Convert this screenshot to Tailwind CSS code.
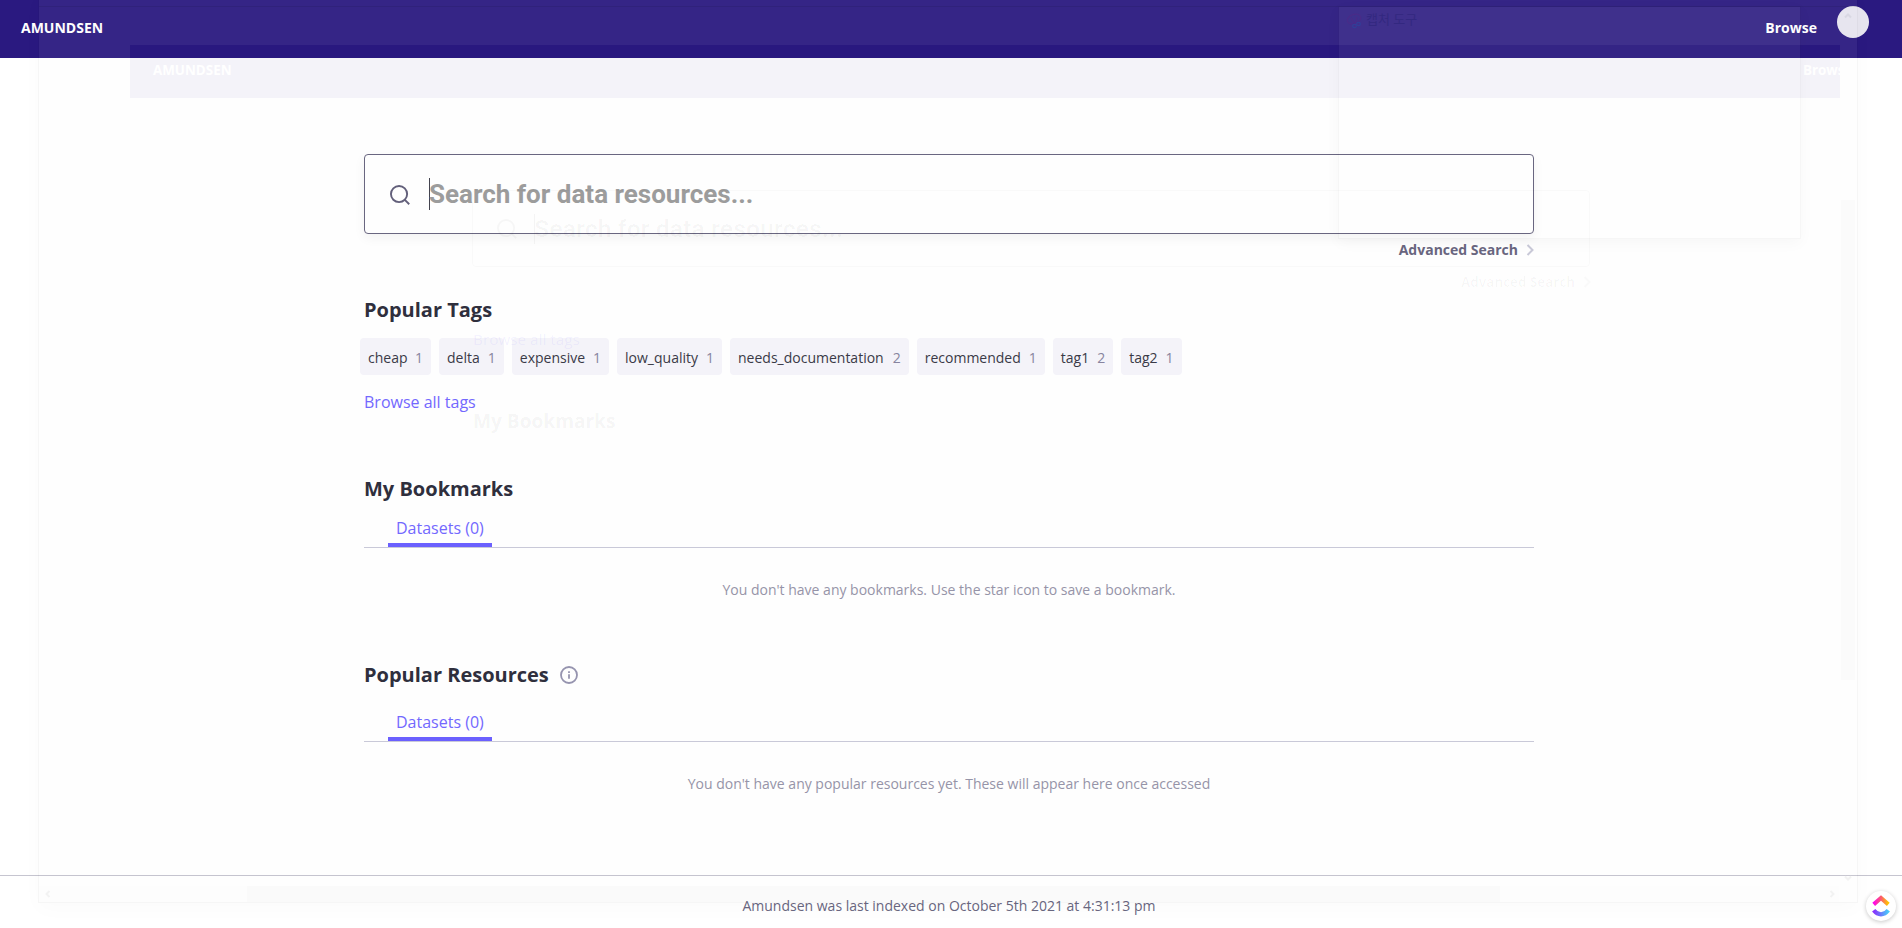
<!DOCTYPE html>
<html lang="en">
<head>
<meta charset="utf-8">
<title>Amundsen</title>
<script src="https://cdn.jsdelivr.net/npm/@tailwindcss/browser@4"></script>
</head>
<body class="relative flex h-[928px] w-[1902px] flex-col overflow-hidden bg-white font-['Open_Sans','Noto_Sans_CJK_KR',sans-serif] text-sm text-[#30303e]">
<header class="flex h-[58px] shrink-0 items-start justify-between bg-[#2a1980] pl-[21px] pr-[33px] font-bold text-white">
  <a class="mt-[18px] leading-5">AMUNDSEN</a>
  <div class="flex items-start gap-5">
    <a class="mt-[18px] leading-5">Browse</a>
    <span class="mt-[6px] size-8 rounded-full bg-[#e7e5ef]"></span>
  </div>
</header>

<main class="ml-[364px] flex w-[1170px] flex-1 flex-col pt-24">
  <div class="flex h-20 shrink-0 items-center rounded border border-[#6a6781] bg-white pl-[25px] shadow-[0_4px_12px_rgba(0,0,0,0.05)]">
    <svg class="mt-px size-5" viewBox="0 0 21 21" fill="none" stroke="#63607b" stroke-width="2"><circle cx="9.5" cy="9.5" r="8.5"/><path d="M15.6 15.6l4.6 4.6"/></svg>
    <span class="ml-[19px] h-8 w-px bg-[#44444f]"></span>
    <span class="-ml-px font-[Roboto] text-[26px] leading-8 font-bold text-[#9d9d9d]">Search for data resources...</span>
  </div>
  <div class="mt-[6px] flex h-5 items-center justify-end gap-2 font-bold text-[#6a6781]">
    <span>Advanced Search</span>
    <svg class="h-3 w-2" viewBox="0 0 8 12" fill="none" stroke="#cacad9" stroke-width="2"><path d="M1.5 1l5 5-5 5"/></svg>
  </div>
  <h2 class="mt-9 text-xl leading-7 font-bold">Popular Tags</h2>
  <div class="-ml-1 mt-[14px] flex gap-2 text-[#3b3b48]">
    <span class="flex h-[37px] items-center gap-[7.5px] rounded bg-[#f5f4fa] px-2 pt-0.5">cheap<i class="not-italic text-[#8885a0]">1</i></span>
    <span class="flex h-[37px] items-center gap-2 rounded bg-[#f5f4fa] px-2 pt-0.5">delta<i class="not-italic text-[#8885a0]">1</i></span>
    <span class="flex h-[37px] items-center gap-2 rounded bg-[#f5f4fa] px-2 pt-0.5">expensive<i class="not-italic text-[#8885a0]">1</i></span>
    <span class="flex h-[37px] items-center gap-2 rounded bg-[#f5f4fa] px-2 pt-0.5">low_quality<i class="not-italic text-[#8885a0]">1</i></span>
    <span class="flex h-[37px] items-center gap-[9px] rounded bg-[#f5f4fa] px-2 pt-0.5">needs_documentation<i class="not-italic text-[#8885a0]">2</i></span>
    <span class="flex h-[37px] items-center gap-2 rounded bg-[#f5f4fa] px-2 pt-0.5">recommended<i class="not-italic text-[#8885a0]">1</i></span>
    <span class="flex h-[37px] items-center gap-2 rounded bg-[#f5f4fa] px-2 pt-0.5">tag1<i class="not-italic text-[#8885a0]">2</i></span>
    <span class="flex h-[37px] items-center gap-2 rounded bg-[#f5f4fa] px-2 pt-0.5">tag2<i class="not-italic text-[#8885a0]">1</i></span>
  </div>
  <a class="mt-[15px] text-base leading-6 text-[#7469ff]">Browse all tags</a>
  <h2 class="mt-[61px] text-xl leading-7 font-bold">My Bookmarks</h2>
  <div class="mt-[13px] flex h-8 border-b border-[#cacad9] pl-6">
    <span class="h-[31px] border-b-4 border-[#6c61ff] px-2 text-base leading-6 text-[#7469ff]">Datasets (0)</span>
  </div>
  <p class="mt-[32px] text-center leading-5 text-[#9795a9]">You don't have any bookmarks. Use the star icon to save a bookmark.</p>
  <div class="mt-[61px] flex items-center gap-[11px]">
    <h2 class="text-xl leading-7 font-bold">Popular Resources</h2>
    <svg class="size-[18px]" viewBox="0 0 18 18" fill="none" stroke="#9795b0" stroke-width="1.8"><circle cx="9" cy="9" r="8"/><path d="M9 8.2v4.6M9 5.2v1.7"/></svg>
  </div>
  <div class="mt-[21px] flex h-8 border-b border-[#cacad9] pl-6">
    <span class="h-[31px] border-b-4 border-[#6c61ff] px-2 text-base leading-6 text-[#7469ff]">Datasets (0)</span>
  </div>
  <p class="mt-[32px] text-center leading-5 text-[#9795a9]">You don't have any popular resources yet. These will appear here once accessed</p>
</main>

<footer class="flex h-[53px] shrink-0 items-start justify-center border-t border-[#c6c5d0] pr-1 pt-5 leading-5 text-[#6a6781]">Amundsen was last indexed on October 5th 2021 at 4:31:13 pm</footer>

<!-- Fading window overlay -->
<div class="pointer-events-none absolute left-[38px] top-[-8px] h-[911px] w-[1820px] border border-black/3 bg-black/[0.004] shadow-[0_6px_20px_rgba(0,0,0,0.02)]">
  <div class="absolute left-0 right-0 top-0 h-[52px] bg-white/6"></div>
  <div class="absolute bottom-0 right-0 top-[52px] w-[17px] bg-white/6"></div>
  <div class="absolute left-0 top-[52px] h-[14px] w-[91px] bg-white/6"></div>
  <div class="absolute left-0 right-0 top-[13px] h-px bg-black/8"></div>
  <div class="absolute left-[91px] top-[65px] h-[40px] w-[1710px] overflow-hidden bg-[#f4f3f9]">
    <span class="absolute left-[23px] top-[2px] text-[13.4px] leading-5 font-bold text-white">AMUNDSEN</span>
    <span class="absolute left-[1673px] top-[2px] text-[13.4px] leading-5 font-bold text-white">Browse</span>
  </div>
  <div class="absolute left-[433px] top-[197px] flex h-[77px] w-[1118px] items-center rounded border border-black/2 pl-[24px] text-black/3">
    <svg class="size-5" viewBox="0 0 21 21" fill="none" stroke="currentColor" stroke-width="2"><circle cx="9.5" cy="9.5" r="8.5"/><path d="M15.6 15.6l4.6 4.6"/></svg>
    <span class="ml-[17px] h-[30px] w-px bg-black/4"></span>
    <span class="-ml-px font-[Roboto] text-[24.8px] font-bold">Search for data resources...</span>
  </div>
  <div class="absolute left-[1422px] top-[279px] flex items-center gap-2 text-[13.4px] leading-5 font-bold text-black/3">Advanced Search
    <svg class="h-3 w-2 text-black/2" viewBox="0 0 8 12" fill="none" stroke="currentColor" stroke-width="2"><path d="M1.5 1l5 5-5 5"/></svg>
  </div>
  <span class="absolute left-[434px] top-[334px] text-[15.3px] leading-6 text-[#665aff]/8">Browse all tags</span>
  <span class="absolute left-[434px] top-[414px] text-[19.1px] leading-7 font-bold text-black/5">My Bookmarks</span>
  <div class="absolute left-[1802px] top-[207px] h-[480px] w-[14px] bg-black/1"></div>
  <div class="absolute bottom-0 left-0 h-[16px] w-[1800px] bg-black/[0.004]"></div>
  <div class="absolute bottom-0 left-[208px] h-[16px] w-[1253px] bg-black/1"></div>
  <svg class="absolute bottom-1 left-[5px] size-2" viewBox="0 0 8 8" fill="none" stroke="#f2f2f2" stroke-width="2"><path d="M5.5 1l-3 3 3 3"/></svg>
  <svg class="absolute bottom-1 left-[1789px] size-2" viewBox="0 0 8 8" fill="none" stroke="#f2f2f2" stroke-width="2"><path d="M2.5 1l3 3-3 3"/></svg>
  <svg class="absolute bottom-[20px] left-[1805px] size-2" viewBox="0 0 8 8" fill="none" stroke="#f2f2f2" stroke-width="2"><path d="M1 2.5l3 3 3-3"/></svg>
  <svg class="absolute left-[1805px] top-[19px] size-2" viewBox="0 0 8 8" fill="none" stroke="#d9d8e3" stroke-width="2"><path d="M1 5.5l3-3 3 3"/></svg>
</div>
<div class="pointer-events-none absolute left-[1338px] top-[6px] h-[233px] w-[463px] border border-black/3 shadow-[0_4px_14px_rgba(0,0,0,0.03)]">
  <div class="h-[51px] bg-white/5"></div>
  <div class="absolute left-[7px] top-[2px] flex items-center gap-1 text-[13px] leading-5 text-[#332880]">
    <svg class="mt-[3px] size-4" viewBox="0 0 16 16" fill="none" stroke="#4a2b88" stroke-width="1.1"><ellipse cx="8" cy="6" rx="7" ry="4.5" transform="rotate(-20 8 6)"/><path d="M5 5l6 9M11 4L9 13"/><circle cx="8.5" cy="13" r="1.8" stroke="#30409a"/><circle cx="12.5" cy="11" r="1.8" stroke="#30409a"/></svg>
    <span>캡처 도구</span>
  </div>
</div>

<!-- Floating ClickUp button -->
<div class="absolute left-[1866px] top-[891px] flex size-[30px] items-center justify-center rounded-full bg-white shadow-[0_1px_4px_rgba(0,0,0,0.22)]">
  <svg class="h-[22px] w-[18px]" viewBox="0 0 18 22" fill="none" stroke-width="4.2">
    <defs>
      <linearGradient id="up" x1="0" x2="1" y1="0" y2="0"><stop stop-color="#ff02f0"/><stop offset=".5" stop-color="#fa5c6c"/><stop offset="1" stop-color="#ffc800"/></linearGradient>
      <linearGradient id="dn" x1="0" x2="1" y1="0" y2="0"><stop stop-color="#8930fd"/><stop offset="1" stop-color="#49ccf9"/></linearGradient>
    </defs>
    <path d="M1.7 9.3L9 3 16.3 9.3" stroke="url(#up)"/>
    <path d="M1.7 15.2Q5 19.3 9 19.3T16.3 15.2" stroke="url(#dn)"/>
  </svg>
</div>
</body>
</html>
